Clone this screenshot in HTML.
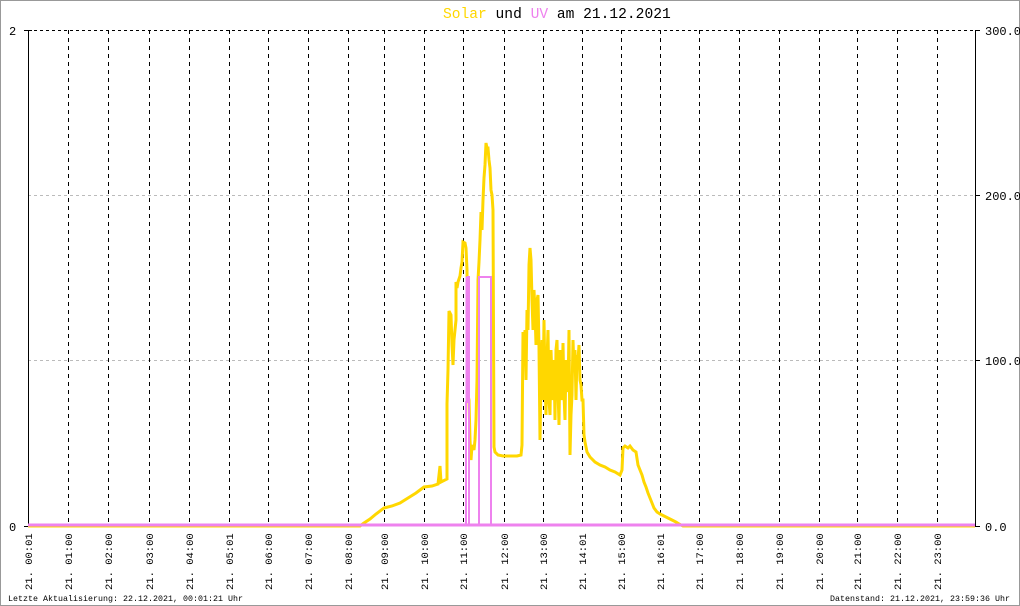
<!DOCTYPE html>
<html><head><meta charset="utf-8"><style>
html,body{margin:0;padding:0;background:#fff}
svg{display:block}
text{font-family:"Liberation Mono","DejaVu Sans Mono",monospace}
</style></head><body>
<svg width="1020" height="606" viewBox="0 0 1020 606" xmlns="http://www.w3.org/2000/svg">
<rect x="0.5" y="0.5" width="1019" height="605" fill="#fff" stroke="#999"/>
<text x="443" y="18" font-size="14.6" fill="#000"><tspan fill="#ffd700">Solar</tspan> und <tspan fill="#ee82ee">UV</tspan> am 21.12.2021</text>
<g stroke-dasharray="3,3" stroke-width="1">
<line x1="28" y1="30.5" x2="975" y2="30.5" stroke="#000"/>
<line x1="28" y1="195.5" x2="975" y2="195.5" stroke="#bbb"/>
<line x1="28" y1="360.5" x2="975" y2="360.5" stroke="#bbb"/>
</g>
<g stroke="#000" stroke-dasharray="4,4" stroke-width="1">
<line x1="68.5" y1="30" x2="68.5" y2="526"/><line x1="108.5" y1="30" x2="108.5" y2="526"/>
<line x1="149.5" y1="30" x2="149.5" y2="526"/><line x1="189.5" y1="30" x2="189.5" y2="526"/>
<line x1="229.5" y1="30" x2="229.5" y2="526"/><line x1="268.5" y1="30" x2="268.5" y2="526"/>
<line x1="308.5" y1="30" x2="308.5" y2="526"/><line x1="348.5" y1="30" x2="348.5" y2="526"/>
<line x1="384.5" y1="30" x2="384.5" y2="526"/><line x1="424.5" y1="30" x2="424.5" y2="526"/>
<line x1="463.5" y1="30" x2="463.5" y2="526"/><line x1="504.5" y1="30" x2="504.5" y2="526"/>
<line x1="543.5" y1="30" x2="543.5" y2="526"/><line x1="582.5" y1="30" x2="582.5" y2="526"/>
<line x1="621.5" y1="30" x2="621.5" y2="526"/><line x1="660.5" y1="30" x2="660.5" y2="526"/>
<line x1="699.5" y1="30" x2="699.5" y2="526"/><line x1="739.5" y1="30" x2="739.5" y2="526"/>
<line x1="779.5" y1="30" x2="779.5" y2="526"/><line x1="819.5" y1="30" x2="819.5" y2="526"/>
<line x1="857.5" y1="30" x2="857.5" y2="526"/><line x1="897.5" y1="30" x2="897.5" y2="526"/>
<line x1="937.5" y1="30" x2="937.5" y2="526"/>
</g>
<g stroke="#000" stroke-width="1">
<line x1="28.5" y1="30" x2="28.5" y2="526"/>
<line x1="24" y1="30.5" x2="32" y2="30.5"/><line x1="24" y1="526.5" x2="28" y2="526.5"/>
<line x1="975.5" y1="30" x2="975.5" y2="526"/>
<line x1="975" y1="30.5" x2="980" y2="30.5"/><line x1="975" y1="195.5" x2="980" y2="195.5"/>
<line x1="975" y1="360.5" x2="980" y2="360.5"/><line x1="975" y1="526.5" x2="980" y2="526.5"/>
</g>
<text x="9" y="35" font-size="12">2</text>
<text x="9" y="531" font-size="12">0</text>
<g font-size="12"><text x="985" y="35">300.0</text><text x="985" y="200">200.0</text><text x="985" y="365">100.0</text><text x="985" y="531">0.0</text></g>
<polyline fill="none" stroke="#ffd700" stroke-width="3" stroke-linejoin="miter" stroke-miterlimit="2" points="
28,526 360,526 364,523 370,519 376,514 384,508 392,506 400,503 408,498 416,493 424,487 432,486 438,484 440,466 441,482 447,479 447,404 448,370 449,311 451,315 452,345 453,365 454,340 456,320 456,282 457,288 458,282 460,276 461,268 462,262 463,242 465,243 466,248 467,270 468,395 469,400 470,440 471,460 472,445 474,450 475,440 476,420 477,380 478,280 479,262 480,240 481,212 482,230 483,200 484,178 485,165 486,143 487,148 488,148 489,160 490,168 491,190 492,195 493,210 494,447 495,452 498,455 503,456 510,456 517,456 521,455 522,445 523,332 524,360 525,330 526,380 527,310 528,330 529,265 530,248 531,260 532,300 533,330 534,290 535,312 536,345 537,300 538,295 539,348 540,440 541,380 542,340 543,400 544,320 545,380 546,415 547,360 548,330 549,400 550,415 551,350 552,380 553,400 554,360 555,420 556,350 557,340 558,390 559,425 560,350 561,380 562,400 563,343 564,395 565,420 566,360 567,380 568,392 569,330 570,455 571,415 572,395 573,340 574,370 575,350 576,400 577,355 578,360 579,345 580,380 581,385 582,400 583,400 584,435 585,442 587,452 590,457 595,462 600,465 605,467 610,470 615,472 620,475 622,470 623,448 625,446 628,448 630,446 633,450 636,452 638,465 640,470 642,475 644,482 646,487 648,493 650,498 652,503 654,508 657,512 660,514 664,516 668,518 672,520 676,522 679,524 683,526 975,526"/>
<g fill="none" stroke="#ee82ee" stroke-width="2">
<line x1="28" y1="525" x2="975" y2="525" stroke-width="3"/>
<polyline points="466,526 466,402 467.5,402 467.5,277 469,277 469,526"/>
<polyline points="479,526 479,277 491,277 491,526"/>
</g>
<line x1="467" y1="402" x2="467" y2="277" stroke="#ee82ee" stroke-width="3"/>
<g font-size="10.5" fill="#000">
<text transform="translate(32,590) rotate(-90)">21. 00:01</text>
<text transform="translate(72,590) rotate(-90)">21. 01:00</text>
<text transform="translate(112,590) rotate(-90)">21. 02:00</text>
<text transform="translate(153,590) rotate(-90)">21. 03:00</text>
<text transform="translate(193,590) rotate(-90)">21. 04:00</text>
<text transform="translate(233,590) rotate(-90)">21. 05:01</text>
<text transform="translate(272,590) rotate(-90)">21. 06:00</text>
<text transform="translate(312,590) rotate(-90)">21. 07:00</text>
<text transform="translate(352,590) rotate(-90)">21. 08:00</text>
<text transform="translate(388,590) rotate(-90)">21. 09:00</text>
<text transform="translate(428,590) rotate(-90)">21. 10:00</text>
<text transform="translate(467,590) rotate(-90)">21. 11:00</text>
<text transform="translate(508,590) rotate(-90)">21. 12:00</text>
<text transform="translate(547,590) rotate(-90)">21. 13:00</text>
<text transform="translate(586,590) rotate(-90)">21. 14:01</text>
<text transform="translate(625,590) rotate(-90)">21. 15:00</text>
<text transform="translate(664,590) rotate(-90)">21. 16:01</text>
<text transform="translate(703,590) rotate(-90)">21. 17:00</text>
<text transform="translate(743,590) rotate(-90)">21. 18:00</text>
<text transform="translate(783,590) rotate(-90)">21. 19:00</text>
<text transform="translate(823,590) rotate(-90)">21. 20:00</text>
<text transform="translate(861,590) rotate(-90)">21. 21:00</text>
<text transform="translate(901,590) rotate(-90)">21. 22:00</text>
<text transform="translate(941,590) rotate(-90)">21. 23:00</text>
</g>
<text x="8" y="601" font-size="8.3" textLength="235">Letzte Aktualisierung: 22.12.2021, 00:01:21 Uhr</text>
<text x="830" y="601" font-size="8.3" textLength="180">Datenstand: 21.12.2021, 23:59:36 Uhr</text>
</svg>
</body></html>
